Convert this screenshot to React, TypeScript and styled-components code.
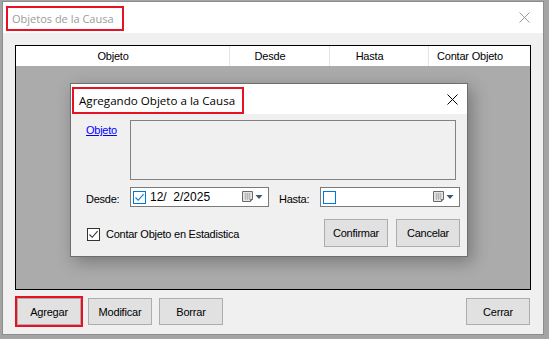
import React from 'react';
import styled, { createGlobalStyle } from 'styled-components';

const GlobalStyle = createGlobalStyle`
  html, body {
    margin: 0;
    padding: 0;
    background: #a4a4a4;
    font-family: "Liberation Sans", Arial, sans-serif;
  }
`;

const columns = [
  { title: 'Objeto', width: 214, align: 'center' },
  { title: 'Desde', width: 100, align: 'center' },
  { title: 'Hasta', width: 99, align: 'center' },
  { title: 'Contar Objeto', width: 101, align: 'left' },
];

const CloseIcon = ({ color }: { color: string }) => (
  <svg width="11" height="11" viewBox="0 0 11 11">
    <path d="M0.5 0.5 L10.5 10.5 M10.5 0.5 L0.5 10.5" stroke={color} strokeWidth="1" fill="none" />
  </svg>
);

const CheckMark = ({ color }: { color: string }) => (
  <svg width="11" height="11" viewBox="0 0 11 11">
    <path d="M1.5 5.5 L4.2 8.3 L9.6 2.2" stroke={color} strokeWidth="1.1" fill="none" />
  </svg>
);

const CalendarIcon = () => (
  <svg width="21" height="12" viewBox="0 0 21 12">
    <path d="M0.5 0.5 H10.5 V8.5 L8.5 10.5 H0.5 Z" fill="#e4e4e4" stroke="#6b6b6b" />
    <path d="M2.5 3 H8.5 M2.5 5 H8.5 M2.5 7 H8.5 M3.5 2 V9 M5.5 2 V9 M7.5 2 V9" stroke="#b0b0b0" strokeWidth="0.8" />
    <path d="M8.5 10.5 V8.5 H10.5" fill="#bdbdbd" stroke="#6b6b6b" />
    <path d="M13.5 4 H20.5 L17 8 Z" fill="#425374" />
  </svg>
);

const DatePicker = ({ value, checked }: { value: string; checked: boolean }) => (
  <Picker>
    <PickerCheck>{checked && <CheckMark color="#0078d7" />}</PickerCheck>
    <PickerText>{value}</PickerText>
    <CalendarIcon />
  </Picker>
);

export default function App() {
  return (
    <>
      <GlobalStyle />
      <Window>
        <TitleBar>
          <Marked>
            <WindowTitle>Objetos de la Causa</WindowTitle>
          </Marked>
          <CloseBox>
            <CloseIcon color="#9a9a9a" />
          </CloseBox>
        </TitleBar>
        <Client>
          <Grid>
            <GridHeader>
              {columns.map((c) => (
                <HeaderCell key={c.title} $w={c.width} $align={c.align}>
                  {c.title}
                </HeaderCell>
              ))}
            </GridHeader>
          </Grid>
          <ButtonRow>
            <Button $marked>Agregar</Button>
            <Button>Modificar</Button>
            <Button>Borrar</Button>
            <Spacer />
            <Button>Cerrar</Button>
          </ButtonRow>
        </Client>

        <Dialog>
          <DialogTitleBar>
            <DialogMarked>
              <DialogTitle>Agregando Objeto a la Causa</DialogTitle>
            </DialogMarked>
            <DialogClose>
              <CloseIcon color="#000" />
            </DialogClose>
          </DialogTitleBar>
          <DialogBody>
            <FieldRow>
              <LinkLabel>Objeto</LinkLabel>
              <TextArea />
            </FieldRow>
            <DateRow>
              <Label $w={44}>Desde:</Label>
              <DatePicker value="12/  2/2025" checked />
              <Label $w={41} $ml={10}>Hasta:</Label>
              <DatePicker value="" checked={false} />
            </DateRow>
            <ActionRow>
              <CheckLabel>
                <Box>
                  <CheckMark color="#333" />
                </Box>
                Contar Objeto en Estadistica
              </CheckLabel>
              <Spacer />
              <DialogButton>Confirmar</DialogButton>
              <DialogButton>Cancelar</DialogButton>
            </ActionRow>
          </DialogBody>
        </Dialog>
      </Window>
    </>
  );
}

const Window = styled.div`
  position: relative;
  margin: 1px 0 0 2px;
  width: 542px;
  height: 334px;
  box-sizing: border-box;
  border: 1px solid #8d8d8d;
  background: #f0f0f0;
  display: flex;
  flex-direction: column;
`;

const TitleBar = styled.div`
  height: 31px;
  flex-shrink: 0;
  background: #fff;
  display: flex;
  align-items: flex-start;
  padding: 6px 0 0 5px;
  box-sizing: border-box;
`;

const Marked = styled.div`
  outline: 2px solid #e81123;
  height: 21px;
  display: flex;
  align-items: center;
  padding: 0 8px 0 4px;
`;

const WindowTitle = styled.span`
  font-family: "Open Sans", "Noto Sans", sans-serif;
  font-size: 11px;
  color: #9b9b9b;
`;

const CloseBox = styled.div`
  margin-left: auto;
  margin-right: 13px;
  align-self: center;
  margin-top: -6px;
  display: flex;
`;

const Client = styled.div`
  flex: 1;
  display: flex;
  flex-direction: column;
  padding: 12px 12px 9px 12px;
`;

const Grid = styled.div`
  height: 245px;
  box-sizing: border-box;
  border: 1px solid #000;
  background: #ababab;
`;

const GridHeader = styled.div`
  height: 20px;
  background: #fff;
  display: flex;
`;

const HeaderCell = styled.div<{ $w: number; $align: string }>`
  width: ${(p) => p.$w}px;
  box-sizing: border-box;
  border-right: 1px solid #e5e5e5;
  font-size: 11px;
  line-height: 20px;
  letter-spacing: -0.2px;
  color: #000;
  text-align: ${(p) => p.$align};
  padding: ${(p) => (p.$align === 'center' ? '0 19px 0 0' : '0 0 0 8px')};
  &:last-child {
    border-right: none;
    flex: 1;
  }
`;

const ButtonRow = styled.div`
  margin-top: 8px;
  display: flex;
  gap: 7px;
  padding-left: 2px;
`;

const Spacer = styled.div`
  flex: 1;
`;

const Button = styled.div<{ $marked?: boolean }>`
  width: 64px;
  height: 27px;
  box-sizing: border-box;
  border: 1px solid #adadad;
  background: #e1e1e1;
  display: flex;
  align-items: center;
  justify-content: center;
  font-size: 11px;
  letter-spacing: -0.2px;
  color: #000;
  outline: ${(p) => (p.$marked ? '2px solid #e81123' : 'none')};
  &:last-child {
    margin-right: 1px;
  }
`;

const Dialog = styled.div`
  position: absolute;
  left: 67px;
  top: 81px;
  width: 398px;
  height: 174px;
  box-sizing: border-box;
  border: 1px solid #6e6e6e;
  background: #f0f0f0;
  display: flex;
  flex-direction: column;
  box-shadow: 4px 5px 16px rgba(0, 0, 0, 0.3);
`;

const DialogTitleBar = styled.div`
  height: 30px;
  flex-shrink: 0;
  background: #fff;
  display: flex;
  align-items: flex-start;
  padding: 5px 0 0 3px;
  box-sizing: border-box;
`;

const DialogMarked = styled.div`
  outline: 2px solid #e81123;
  height: 23px;
  display: flex;
  align-items: center;
  padding: 0 7px 0 5px;
`;

const DialogTitle = styled.span`
  font-family: "Open Sans", "Noto Sans", sans-serif;
  font-size: 11.6px;
  color: #000;
`;

const DialogClose = styled.div`
  margin-left: auto;
  margin-right: 9px;
  align-self: center;
  margin-top: -5px;
  display: flex;
`;

const DialogBody = styled.div`
  padding: 6px 7px 0 15px;
  display: flex;
  flex-direction: column;
  font-size: 11px;
  letter-spacing: -0.25px;
  color: #000;
`;

const FieldRow = styled.div`
  display: flex;
`;

const LinkLabel = styled.div`
  width: 44px;
  padding-top: 4px;
  color: #0000ff;
  text-decoration: underline;
`;

const TextArea = styled.div`
  width: 326px;
  height: 60px;
  box-sizing: border-box;
  border: 1px solid #828282;
  background: #f0f0f0;
`;

const DateRow = styled.div`
  margin-top: 7px;
  display: flex;
  align-items: center;
`;

const Label = styled.div<{ $w: number; $ml?: number }>`
  width: ${(p) => p.$w}px;
  margin-left: ${(p) => p.$ml ?? 0}px;
  padding-top: 3px;
`;

const Picker = styled.div`
  width: 139px;
  &:last-child {
    width: 140px;
  }
  height: 20px;
  box-sizing: border-box;
  border: 1px solid #7a7a7a;
  background: #fff;
  display: flex;
  align-items: center;
  padding: 0 5px 0 2px;
`;

const PickerCheck = styled.div`
  width: 13px;
  height: 13px;
  box-sizing: border-box;
  border: 1px solid #0078d7;
  background: #fff;
  display: flex;
`;

const PickerText = styled.span`
  flex: 1;
  margin-left: 4px;
  font-size: 12px;
  letter-spacing: 0;
  white-space: pre;
`;

const ActionRow = styled.div`
  margin-top: 12px;
  display: flex;
  align-items: center;
  gap: 8px;
`;

const CheckLabel = styled.div`
  display: flex;
  align-items: center;
  gap: 6px;
  margin-left: 1px;
  padding-top: 2px;
`;

const Box = styled.div`
  width: 13px;
  height: 13px;
  box-sizing: border-box;
  border: 1px solid #333;
  background: #fff;
  display: flex;
`;

const DialogButton = styled.div`
  width: 64px;
  height: 28px;
  box-sizing: border-box;
  border: 1px solid #adadad;
  background: #e1e1e1;
  display: flex;
  align-items: center;
  justify-content: center;
`;
